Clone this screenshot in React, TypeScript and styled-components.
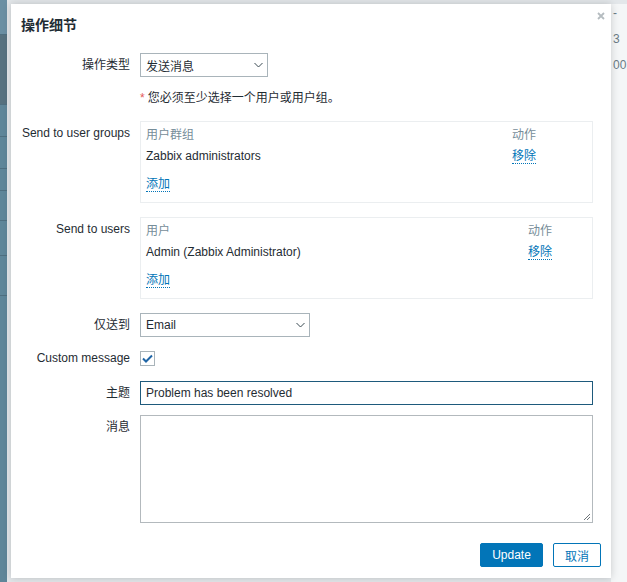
import React from "react";
import styled, { createGlobalStyle } from "styled-components";

const Global = createGlobalStyle`
  html, body { margin: 0; padding: 0; }
  body {
    font-family: "Liberation Sans", Arial, "Noto Sans CJK SC", sans-serif;
    font-size: 12px;
    color: #1f2c33;
  }
  * { box-sizing: border-box; }
`;

const Page = styled.div`
  position: relative;
  width: 627px;
  height: 582px;
  overflow: hidden;
  display: flex;
  background: #e3e7ea;
`;

const Sidebar = styled.div`
  width: 7px;
  display: flex;
  flex-direction: column;
  background: #5f8699;
`;

const SideBlock = styled.div<{ $h: number; $c: string }>`
  height: ${(p) => p.$h}px;
  background: ${(p) => p.$c};
  border-bottom: 1px solid #4f6f80;
`;

const Main = styled.div`
  flex: 1;
  display: flex;
  justify-content: flex-end;
  padding-top: 4px;
  background: #e3e7ea;
`;

const RightCol = styled.div`
  width: 16px;
  background: #f4f6f7;
  display: flex;
  flex-direction: column;
  padding-left: 2px;
  color: #6b7c86;
  font-size: 12px;
  overflow: hidden;
  white-space: nowrap;
`;

const RightText = styled.div<{ $mt: number }>`
  margin-top: ${(p) => p.$mt}px;
  line-height: 14px;
`;

const Dialog = styled.div`
  position: absolute;
  left: 11px;
  top: 4px;
  width: 600px;
  height: 574px;
  background: #ffffff;
  box-shadow: 0 0 8px rgba(0, 0, 0, 0.18);
  display: flex;
  flex-direction: column;
`;

const Header = styled.div`
  padding: 12px 10px;
`;

const Title = styled.h4`
  margin: 0;
  font-size: 14px;
  line-height: 18px;
  font-weight: bold;
  color: #1f2c33;
`;

const CloseBtn = styled.button`
  position: absolute;
  top: 7px;
  right: 5px;
  width: 10px;
  height: 10px;
  padding: 0;
  border: 0;
  background: transparent;
  display: flex;
  align-items: center;
  justify-content: center;
  cursor: pointer;
`;

const Body = styled.div`
  padding: 7px 18px 0 10px;
  display: flex;
  flex-direction: column;
`;

const Row = styled.div<{ $mt?: number; $align?: string }>`
  display: grid;
  grid-template-columns: 109px 1fr;
  column-gap: 10px;
  margin-top: ${(p) => p.$mt ?? 0}px;
  align-items: ${(p) => p.$align ?? "center"};
`;

const Label = styled.label<{ $pt?: number }>`
  text-align: right;
  white-space: nowrap;
  line-height: 16px;
  padding-top: ${(p) => p.$pt ?? 0}px;
  color: #1f2c33;
`;

const SelectBox = styled.div<{ $w: number }>`
  width: ${(p) => p.$w}px;
  height: 24px;
  border: 1px solid #a9b4ba;
  background: #fff;
  display: flex;
  align-items: center;
  justify-content: space-between;
  padding: 0 4px 0 5px;
  color: #1f2c33;
`;

const Message = styled.div`
  line-height: 20px;
  color: #1f2c33;
`;

const Asterisk = styled.span`
  color: #e45959;
  margin-right: 3px;
`;

const ListBox = styled.div`
  border: 1px solid #ebeef0;
  padding: 4px 5px 9px 5px;
  display: flex;
  flex-direction: column;
`;

const ListRow = styled.div<{ $aw: number; $mt?: number }>`
  display: grid;
  grid-template-columns: 1fr ${(p) => p.$aw}px;
  line-height: 18px;
  margin-top: ${(p) => p.$mt ?? 0}px;
`;

const HeadCell = styled.span`
  color: #768d99;
`;

const Cell = styled.span`
  color: #1f2c33;
`;

const LinkRow = styled.div`
  margin-top: 10px;
  line-height: 18px;
`;

const Link = styled.a`
  color: #0275b8;
  text-decoration: none;
  border-bottom: 1px dotted #0275b8;
  cursor: pointer;
`;

const CheckBox = styled.span`
  width: 15px;
  height: 15px;
  border: 1px solid #a9b4ba;
  background: #fff;
  display: flex;
  align-items: center;
  justify-content: center;
`;

const TextInput = styled.div`
  height: 24px;
  border: 1px solid #1e5a7c;
  display: flex;
  align-items: center;
  padding: 0 5px;
  color: #1f2c33;
`;

const TextArea = styled.div`
  position: relative;
  height: 108px;
  border: 1px solid #b3b9bd;
  background: #fff;
`;

const Grip = styled.svg`
  position: absolute;
  right: 1px;
  bottom: 1px;
`;

const Footer = styled.div`
  margin-top: 20px;
  padding-right: 10px;
  display: flex;
  justify-content: flex-end;
  gap: 10px;
`;

const Button = styled.button<{ $primary?: boolean; $w: number }>`
  width: ${(p) => p.$w}px;
  height: 24px;
  border-radius: 2px;
  font-family: "Liberation Sans", Arial, "Noto Sans CJK SC", sans-serif;
  font-size: 12px;
  padding: 0;
  cursor: pointer;
  border: 1px solid #0275b8;
  background: ${(p) => (p.$primary ? "#0275b8" : "#ffffff")};
  color: ${(p) => (p.$primary ? "#ffffff" : "#0275b8")};
`;

const Chevron = () => (
  <svg width="9" height="6" viewBox="0 0 9 6">
    <path d="M0.5 1 L4.5 5 L8.5 1" fill="none" stroke="#3b4a52" strokeWidth="1" />
  </svg>
);

const sideBlocks: [number, string][] = [
  [35, "#6a8fa3"],
  [70, "#56717f"],
  [32, "#5f8699"],
  [32, "#5f8699"],
  [22, "#5f8699"],
  [30, "#5f8699"],
  [35, "#5f8699"],
  [40, "#5f8699"],
];

export default function App() {
  return (
    <>
      <Global />
      <Page>
        <Sidebar>
          {sideBlocks.map(([h, c], i) => (
            <SideBlock key={i} $h={h} $c={c} />
          ))}
        </Sidebar>
        <Main>
          <RightCol>
            <RightText $mt={2}>-</RightText>
            <RightText $mt={12}>3</RightText>
            <RightText $mt={12}>00</RightText>
          </RightCol>
        </Main>
        <Dialog>
          <Header>
            <Title>操作细节</Title>
          </Header>
          <CloseBtn aria-label="close">
            <svg width="8" height="8" viewBox="0 0 8 8">
              <path d="M1 1 L7 7 M7 1 L1 7" stroke="#b5bcc0" strokeWidth="1.8" />
            </svg>
          </CloseBtn>
          <Body>
            <Row>
              <Label>操作类型</Label>
              <SelectBox $w={128}>
                <span>发送消息</span>
                <Chevron />
              </SelectBox>
            </Row>
            <Row $mt={11}>
              <span />
              <Message>
                <Asterisk>*</Asterisk>您必须至少选择一个用户或用户组。
              </Message>
            </Row>
            <Row $mt={13} $align="start">
              <Label $pt={4}>Send to user groups</Label>
              <ListBox>
                <ListRow $aw={75}>
                  <HeadCell>用户群组</HeadCell>
                  <HeadCell>动作</HeadCell>
                </ListRow>
                <ListRow $aw={75} $mt={3}>
                  <Cell>Zabbix administrators</Cell>
                  <span>
                    <Link>移除</Link>
                  </span>
                </ListRow>
                <LinkRow>
                  <Link>添加</Link>
                </LinkRow>
              </ListBox>
            </Row>
            <Row $mt={14} $align="start">
              <Label $pt={4}>Send to users</Label>
              <ListBox>
                <ListRow $aw={59}>
                  <HeadCell>用户</HeadCell>
                  <HeadCell>动作</HeadCell>
                </ListRow>
                <ListRow $aw={59} $mt={3}>
                  <Cell>Admin (Zabbix Administrator)</Cell>
                  <span>
                    <Link>移除</Link>
                  </span>
                </ListRow>
                <LinkRow>
                  <Link>添加</Link>
                </LinkRow>
              </ListBox>
            </Row>
            <Row $mt={14}>
              <Label>仅送到</Label>
              <SelectBox $w={170}>
                <span>Email</span>
                <Chevron />
              </SelectBox>
            </Row>
            <Row $mt={13}>
              <Label>Custom message</Label>
              <CheckBox>
                <svg width="11" height="9" viewBox="0 0 11 9">
                  <path d="M1 4.5 L4 7.5 L10 1.5" fill="none" stroke="#1f65a6" strokeWidth="2" />
                </svg>
              </CheckBox>
            </Row>
            <Row $mt={15}>
              <Label>主题</Label>
              <TextInput>Problem has been resolved</TextInput>
            </Row>
            <Row $mt={10} $align="start">
              <Label $pt={4}>消息</Label>
              <TextArea>
                <Grip width="9" height="9" viewBox="0 0 9 9">
                  <path d="M8 2 L2 8 M8 5 L5 8" stroke="#6f767a" strokeWidth="1" />
                </Grip>
              </TextArea>
            </Row>
          </Body>
          <Footer>
            <Button $primary $w={63}>Update</Button>
            <Button $w={48}>取消</Button>
          </Footer>
        </Dialog>
      </Page>
    </>
  );
}
